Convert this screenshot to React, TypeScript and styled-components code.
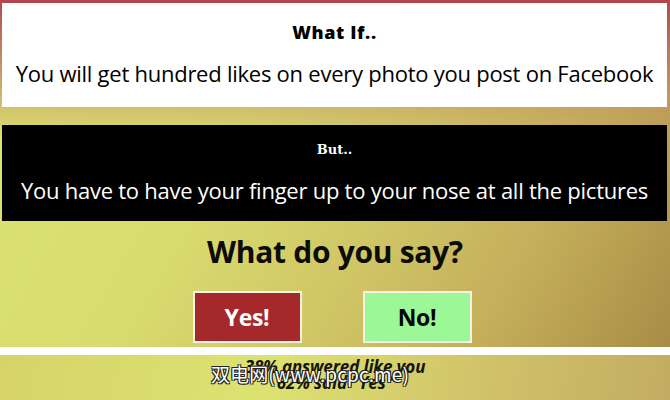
import React from "react";
import styled, { createGlobalStyle } from "styled-components";

const Global = createGlobalStyle`
  html, body { margin: 0; padding: 0; }
  body { font-family: "Open Sans", "Noto Sans", sans-serif; }
`;

const Page = styled.div`
  position: relative;
  width: 670px;
  height: 400px;
  overflow: hidden;
  display: flex;
  flex-direction: column;
`;

const Stage = styled.div`
  height: 347px;
  display: flex;
  flex-direction: column;
  background:
    linear-gradient(to bottom, rgba(178, 70, 76, 1) 0px, rgba(184, 100, 90, 0.85) 40px, rgba(192, 140, 100, 0.5) 95px, rgba(200, 160, 110, 0) 140px),
    linear-gradient(120deg, #dce472 0%, #d8dc6e 35%, #d0c666 58%, #c4ae5a 78%, #a88c46 100%);
`;

const Card = styled.div<{ $dark?: boolean }>`
  margin: ${(p) => (p.$dark ? "18px 3px 0 2px" : "3px 3px 0 2px")};
  height: ${(p) => (p.$dark ? "96px" : "104px")};
  background: ${(p) => (p.$dark ? "#000" : "#fff")};
  color: ${(p) => (p.$dark ? "#fff" : "#000")};
  display: flex;
  flex-direction: column;
  align-items: center;
  box-sizing: border-box;
  padding-top: ${(p) => (p.$dark ? "16px" : "18px")};
`;

const CardTitle = styled.div`
  font-family: "Open Sans", sans-serif;
  font-weight: 800;
  font-size: 18px;
  line-height: 22px;
  letter-spacing: 0.6px;
`;

const SerifTitle = styled.div`
  font-family: "DejaVu Serif", "Liberation Serif", serif;
  font-weight: 700;
  font-size: 13px;
  line-height: 18px;
`;

const CardText = styled.div<{ $dark?: boolean }>`
  margin-top: ${(p) => (p.$dark ? "17px" : "16px")};
  font-family: "Open Sans", sans-serif;
  font-size: 22px;
  line-height: 28px;
  letter-spacing: -0.25px;
  white-space: nowrap;
`;

const Question = styled.h2`
  margin: 12px 0 0;
  text-align: center;
  font-family: "Open Sans", sans-serif;
  font-weight: 700;
  font-size: 30px;
  line-height: 38px;
  letter-spacing: -0.3px;
  color: #0c0c06;
`;

const ButtonRow = styled.div`
  display: flex;
  justify-content: center;
  gap: 61px;
  margin-top: 20px;
  padding-right: 6px;
`;

const Choice = styled.button<{ $yes?: boolean }>`
  width: 109px;
  height: 52px;
  box-sizing: border-box;
  border: 2px solid #f4f2e6;
  background: ${(p) => (p.$yes ? "#a5282a" : "#9cf897")};
  color: ${(p) => (p.$yes ? "#fff" : "#000")};
  font-family: "Open Sans", sans-serif;
  font-weight: 700;
  font-size: 23px;
  letter-spacing: -0.3px;
  padding: 0;
  cursor: pointer;
`;

const Divider = styled.div`
  height: 8px;
  background: #fff;
`;

const Results = styled.div`
  position: relative;
  flex: 1;
  display: flex;
  flex-direction: column;
  align-items: center;
  padding-top: 4px;
  background: linear-gradient(100deg, #d6d468 0%, #dce272 40%, #d2c46a 70%, #c2ac62 100%);
`;

const ResultLine = styled.div`
  font-family: "Open Sans", sans-serif;
  font-weight: 700;
  font-style: italic;
  font-size: 17px;
  line-height: 16px;
  letter-spacing: -0.1px;
  color: #141408;
`;

const Watermark = styled.div`
  position: absolute;
  left: 211px;
  top: 8px;
  font-family: "Noto Sans CJK SC", "Open Sans", sans-serif;
  font-size: 19px;
  line-height: 22px;
  color: #fff;
  letter-spacing: 0.1px;
  text-shadow: 1px 1px 0 #222, -1px -1px 0 #222, 1px -1px 0 #222, -1px 1px 0 #222;
`;

export default function App() {
  return (
    <>
      <Global />
      <Page>
        <Stage>
          <Card>
            <CardTitle>What If..</CardTitle>
            <CardText>You will get hundred likes on every photo you post on Facebook</CardText>
          </Card>
          <Card $dark>
            <SerifTitle>But..</SerifTitle>
            <CardText $dark>You have to have your finger up to your nose at all the pictures</CardText>
          </Card>
          <Question>What do you say?</Question>
          <ButtonRow>
            <Choice $yes>Yes!</Choice>
            <Choice>No!</Choice>
          </ButtonRow>
        </Stage>
        <Divider />
        <Results>
          <ResultLine>38% answered like you</ResultLine>
          <ResultLine>62% said "Yes"</ResultLine>
          <Watermark>双电网(www.pcpc.me)</Watermark>
        </Results>
      </Page>
    </>
  );
}
